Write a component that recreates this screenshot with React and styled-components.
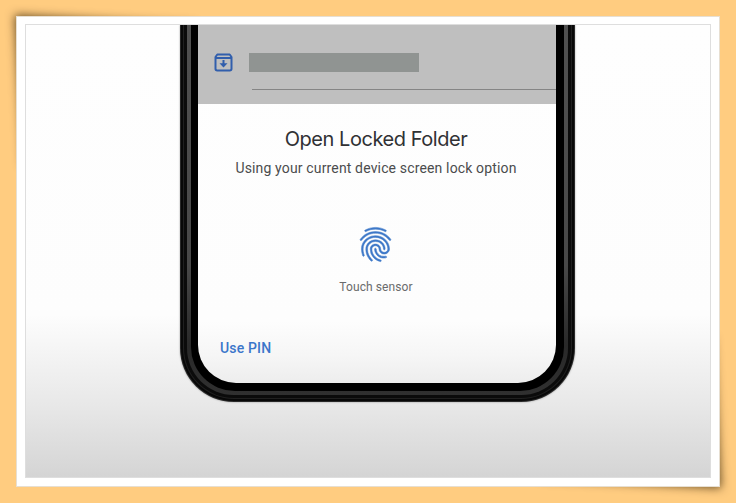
import React from "react";
import styled, { createGlobalStyle } from "styled-components";
import { MdFingerprint } from "react-icons/md";

const GlobalStyle = createGlobalStyle`
  * { box-sizing: border-box; }
  body { margin: 0; background: #ffcc80; overflow: hidden; }
`;

const Page = styled.main`
  width: 736px;
  height: 503px;
  padding: 16px;
  background: #ffcc80;
  overflow: hidden;
`;

const Frame = styled.div`
  position: relative;
  isolation: isolate;
  width: 704px;
  height: 471px;
`;

const CurlShadow = styled.div`
  position: absolute;
  z-index: -1;
  width: 180px;
  height: 150px;
  ${({ $corner }) =>
    $corner === "top"
      ? "top: 4px; left: 4px; transform-origin: 0 0; box-shadow: -5px -5px 10px rgba(40, 25, 0, 0.7); transform: skew(3deg, 3deg);"
      : "bottom: 4px; right: 4px; transform-origin: 100% 100%; box-shadow: 5px 5px 10px rgba(40, 25, 0, 0.7); transform: skew(3deg, 3deg);"}
`;

const Mat = styled.div`
  width: 100%;
  height: 100%;
  padding: 7px 0 0 8px;
  background: #fff;
  border: 1px solid #e7dfd2;
`;

const Photo = styled.section`
  width: 686px;
  height: 454px;
  display: flex;
  align-items: flex-start;
  padding-left: 154px;
  overflow: hidden;
  border: 1px solid #dedede;
  background: linear-gradient(#fefefe 0, #fdfdfd 290px, #f5f5f5 324px, #e8e8e8 380px, #d4d4d4 453px);
`;

const Phone = styled.div`
  width: 395px;
  height: 377px;
  padding: 0 1px 1px;
  background: #292929;
  border-radius: 0 0 54px 54px;
  box-shadow: 0 0 2px rgba(0, 0, 0, 0.4);
`;

const Ring = styled.div`
  height: 100%;
  padding: 0 ${({ $right, $size }) => $right ?? $size}px ${({ $bottom, $size }) => $bottom ?? $size}px ${({ $size }) => $size}px;
  background: ${({ $color }) => $color};
  border-radius: 0 0 ${({ $radius }) => $radius}px ${({ $radius }) => $radius}px;
`;

const Screen = styled.div`
  height: 100%;
  display: flex;
  flex-direction: column;
  overflow: hidden;
  border-radius: 0 0 38px 38px;
  background: linear-gradient(#fefefe 0, #fdfdfd 296px, #f6f6f6 330px, #ededed 358px);
  color: #4b4c4d;
  font-family: Roboto, sans-serif;
`;

const DimmedRow = styled.div`
  flex: none;
  height: 79px;
  padding: 28px 0 0 16px;
  display: flex;
  align-items: flex-start;
  background: #bfbfbf;
`;

const RowBody = styled.div`
  flex: 1;
  margin-left: 16px;
`;

const Placeholder = styled.div`
  width: 170px;
  height: 19px;
  background: #909492;
`;

const Rule = styled.div`
  height: 1px;
  margin: 17px 0 0 3px;
  background: #858585;
`;

const Prompt = styled.div`
  flex: 1;
  display: flex;
  flex-direction: column;
  align-items: center;
`;

const Title = styled.h1`
  margin: 22px 0 0 -2px;
  font: 400 20px/26px Inter, sans-serif;
  letter-spacing: -0.45px;
  color: #303134;
  white-space: nowrap;
`;

const Subtitle = styled.p`
  margin: 7px 0 0 -2px;
  font-size: 14px;
  line-height: 18px;
  letter-spacing: 0.15px;
  white-space: nowrap;
`;

const Fingerprint = styled(MdFingerprint)`
  width: 41px;
  height: 41px;
  flex: none;
  margin: 47px 0 0 -3px;
  color: #3f79c9;
  stroke: none;

  path:not([fill="none"]) {
    stroke: #3f79c9;
    stroke-width: 0.3;
  }
`;

const SensorLabel = styled.p`
  margin: 14px 0 0 -2px;
  font-size: 12px;
  line-height: 16px;
  letter-spacing: 0.1px;
  color: #6a6b6c;
`;

const PinButton = styled.button`
  align-self: flex-start;
  margin: 43px 0 0 22px;
  padding: 0;
  border: 0;
  background: none;
  color: #3b76ca;
  font: 500 14px/20px Roboto, sans-serif;
  letter-spacing: 0.15px;
`;

const Archive = styled.svg`
  width: 19px;
  height: 19px;
  fill: none;
  stroke: #315eac;
  stroke-width: 2;
  stroke-linejoin: round;
`;

export default function App() {
  return (
    <Page>
      <GlobalStyle />
      <Frame>
        <CurlShadow $corner="top" />
        <CurlShadow $corner="bottom" />
        <Mat>
          <Photo>
            <Phone>
              <Ring $size={2} $radius={53} $color="#080808">
                <Ring $size={1} $radius={51} $color="#202020">
                  <Ring $size={3} $radius={50} $color="#0b0b0b">
                    <Ring $size={4} $radius={47} $color="linear-gradient(#505050 0, #484848 240px, #292929 320px, #303030)">
                      <Ring $size={7} $right={8} $bottom={8} $radius={44} $color="#000">
                        <Screen>
                          <DimmedRow>
                            <Archive viewBox="0 0 19 19" aria-hidden="true">
                              <path d="M3.3 1.5h12.4L17.5 4v11.8q0 1.7-1.7 1.7H3.2q-1.7 0-1.7-1.7V4zM2 5h15" />
                              <path d="M9.5 7v5" />
                              <path d="M5.5 10.2h8L9.5 14.4z" fill="#315eac" stroke="none" />
                            </Archive>
                            <RowBody>
                              <Placeholder />
                              <Rule />
                            </RowBody>
                          </DimmedRow>
                          <Prompt>
                            <Title>Open Locked Folder</Title>
                            <Subtitle>Using your current device screen lock option</Subtitle>
                            <Fingerprint aria-hidden="true" />
                            <SensorLabel>Touch sensor</SensorLabel>
                            <PinButton type="button">Use PIN</PinButton>
                          </Prompt>
                        </Screen>
                      </Ring>
                    </Ring>
                  </Ring>
                </Ring>
              </Ring>
            </Phone>
          </Photo>
        </Mat>
      </Frame>
    </Page>
  );
}
